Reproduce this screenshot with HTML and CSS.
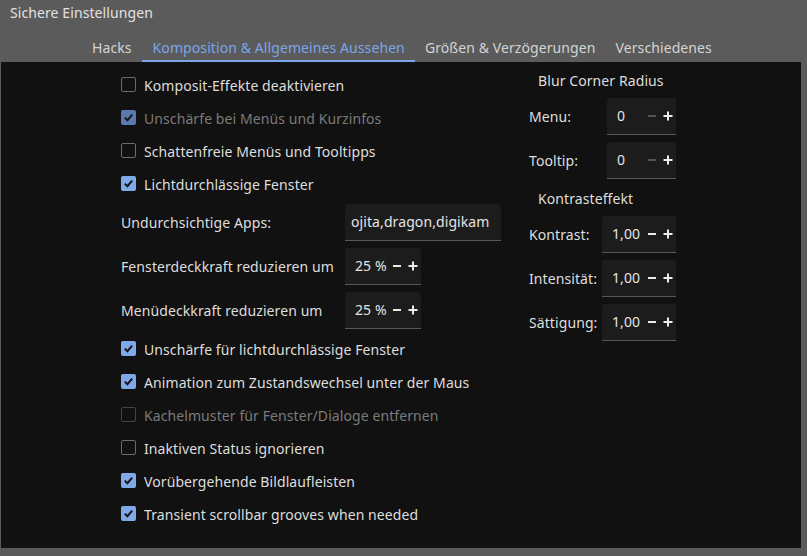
FILE: index.html
```html
<!DOCTYPE html>
<html lang="de">
<head>
<meta charset="utf-8">
<title>Sichere Einstellungen</title>
<link rel="stylesheet" href="styles.css">
</head>
<body>
<div class="window">
  <div class="title">Sichere Einstellungen</div>
  <div class="tabs">
    <div class="tab">Hacks</div>
    <div class="tab active">Komposition &amp; Allgemeines Aussehen</div>
    <div class="tab">Größen &amp; Verzögerungen</div>
    <div class="tab">Verschiedenes</div>
  </div>
  <div class="panel">
    <div class="col-left">
      <div class="check"><span class="box"></span><span class="lbl">Komposit-Effekte deaktivieren</span></div>
      <div class="check disabled"><span class="box on"><svg viewBox="0 0 15 15"><path d="M3.8 7.6 L6.4 10.2 L11.2 4.6"/></svg></span><span class="lbl">Unschärfe bei Menüs und Kurzinfos</span></div>
      <div class="check"><span class="box"></span><span class="lbl">Schattenfreie Menüs und Tooltipps</span></div>
      <div class="check"><span class="box on"><svg viewBox="0 0 15 15"><path d="M3.8 7.6 L6.4 10.2 L11.2 4.6"/></svg></span><span class="lbl">Lichtdurchlässige Fenster</span></div>

      <div class="formrow"><span class="flabel">Undurchsichtige Apps:</span><div class="field text-field"><span class="clip">ojita,dragon,digikam</span></div></div>
      <div class="formrow"><span class="flabel">Fensterdeckkraft reduzieren um</span><div class="field spin w76"><span class="val">25 %</span><span class="btns"><svg class="minus" viewBox="0 0 16 16"><rect x="4" y="7" width="8" height="2"/></svg><svg class="plus" viewBox="0 0 16 16"><rect x="3.5" y="7" width="9" height="2"/><rect x="7" y="3.5" width="2" height="9"/></svg></span></div></div>
      <div class="formrow"><span class="flabel">Menüdeckkraft reduzieren um</span><div class="field spin w76"><span class="val">25 %</span><span class="btns"><svg class="minus" viewBox="0 0 16 16"><rect x="4" y="7" width="8" height="2"/></svg><svg class="plus" viewBox="0 0 16 16"><rect x="3.5" y="7" width="9" height="2"/><rect x="7" y="3.5" width="2" height="9"/></svg></span></div></div>

      <div class="check"><span class="box on"><svg viewBox="0 0 15 15"><path d="M3.8 7.6 L6.4 10.2 L11.2 4.6"/></svg></span><span class="lbl">Unschärfe für lichtdurchlässige Fenster</span></div>
      <div class="check"><span class="box on"><svg viewBox="0 0 15 15"><path d="M3.8 7.6 L6.4 10.2 L11.2 4.6"/></svg></span><span class="lbl">Animation zum Zustandswechsel unter der Maus</span></div>
      <div class="check disabled"><span class="box"></span><span class="lbl">Kachelmuster für Fenster/Dialoge entfernen</span></div>
      <div class="check"><span class="box"></span><span class="lbl">Inaktiven Status ignorieren</span></div>
      <div class="check"><span class="box on"><svg viewBox="0 0 15 15"><path d="M3.8 7.6 L6.4 10.2 L11.2 4.6"/></svg></span><span class="lbl">Vorübergehende Bildlaufleisten</span></div>
      <div class="check"><span class="box on"><svg viewBox="0 0 15 15"><path d="M3.8 7.6 L6.4 10.2 L11.2 4.6"/></svg></span><span class="lbl">Transient scrollbar grooves when needed</span></div>
    </div>

    <div class="col-right">
      <div class="heading">Blur Corner Radius</div>
      <div class="rrow"><span class="rlabel l78">Menu:</span><div class="field spin w69"><span class="val">0</span><span class="btns"><svg class="minus off" viewBox="0 0 16 16"><rect x="4" y="7" width="8" height="2"/></svg><svg class="plus" viewBox="0 0 16 16"><rect x="3.5" y="7" width="9" height="2"/><rect x="7" y="3.5" width="2" height="9"/></svg></span></div></div>
      <div class="rrow"><span class="rlabel l78">Tooltip:</span><div class="field spin w69"><span class="val">0</span><span class="btns"><svg class="minus off" viewBox="0 0 16 16"><rect x="4" y="7" width="8" height="2"/></svg><svg class="plus" viewBox="0 0 16 16"><rect x="3.5" y="7" width="9" height="2"/><rect x="7" y="3.5" width="2" height="9"/></svg></span></div></div>

      <div class="heading second">Kontrasteffekt</div>
      <div class="rrow"><span class="rlabel l73">Kontrast:</span><div class="field spin w74"><span class="val">1,00</span><span class="btns"><svg class="minus" viewBox="0 0 16 16"><rect x="4" y="7" width="8" height="2"/></svg><svg class="plus" viewBox="0 0 16 16"><rect x="3.5" y="7" width="9" height="2"/><rect x="7" y="3.5" width="2" height="9"/></svg></span></div></div>
      <div class="rrow"><span class="rlabel l73">Intensität:</span><div class="field spin w74"><span class="val">1,00</span><span class="btns"><svg class="minus" viewBox="0 0 16 16"><rect x="4" y="7" width="8" height="2"/></svg><svg class="plus" viewBox="0 0 16 16"><rect x="3.5" y="7" width="9" height="2"/><rect x="7" y="3.5" width="2" height="9"/></svg></span></div></div>
      <div class="rrow"><span class="rlabel l73">Sättigung:</span><div class="field spin w74"><span class="val">1,00</span><span class="btns"><svg class="minus" viewBox="0 0 16 16"><rect x="4" y="7" width="8" height="2"/></svg><svg class="plus" viewBox="0 0 16 16"><rect x="3.5" y="7" width="9" height="2"/><rect x="7" y="3.5" width="2" height="9"/></svg></span></div></div>
    </div>
  </div>
</div>
</body>
</html>
```
FILE: styles.css
```css
* { box-sizing: border-box; }

html, body {
  margin: 0;
  padding: 0;
  background: #5b5b5b;
}

body {
  font-family: "Noto Sans", "Open Sans", sans-serif;
  font-size: 14px;
  letter-spacing: 0.09px;
  color: #dedede;
  width: 807px;
  height: 556px;
  overflow: hidden;
}

.title {
  padding: 3px 10px 0;
  line-height: 19px;
  height: 22px;
  color: #e2e2e2;
}

.tabs {
  display: flex;
  margin-top: 14px;
  padding-left: 82px;
  height: 26px;
}

.tab {
  padding: 2px 10px 0;
  line-height: 20px;
  height: 26px;
  color: #d4d4d4;
  border-bottom: 2px solid transparent;
}

.tab.active {
  color: #7ba6e8;
  border-bottom-color: #7ba6e8;
  padding-left: 11px;
}

.panel {
  margin-left: 1px;
  width: 800px;
  height: 486px;
  background: #111111;
  display: flex;
  padding-top: 6px;
}

.col-left {
  width: 528px;
  padding-left: 120px;
  display: flex;
  flex-direction: column;
}

.check {
  display: flex;
  align-items: center;
  height: 33px;
  gap: 8px;
  color: #dedede;
}

.check .lbl { padding-top: 2px; }

.check.disabled { color: #7b7b7b; }

.box {
  width: 15px;
  height: 15px;
  border: 1.5px solid #6b6b6b;
  border-radius: 2px;
  flex: none;
  display: flex;
  align-items: center;
  justify-content: center;
  margin-top: -1px;
}

.check.disabled .box { border-color: #444; }

.box.on {
  border: none;
  background: #80a9ea;
}

.check.disabled .box.on { background: #5a7aaf; }

.box svg {
  width: 15px;
  height: 15px;
  fill: none;
  stroke: #151515;
  stroke-width: 2;
}

.formrow {
  display: flex;
  align-items: center;
  height: 44px;
}

.flabel {
  width: 224px;
  flex: none;
}

.field {
  height: 37px;
  background: #1c1c1c;
  border-bottom: 1px solid #585858;
  border-radius: 3px 3px 0 0;
  display: flex;
  align-items: center;
  color: #e4e4e4;
}

.text-field {
  width: 156px;
  padding-left: 6px;
  overflow: hidden;
}

.clip { white-space: nowrap; }

.spin { padding-left: 10px; }
.w76 { width: 76px; }
.w69 { width: 69px; }
.w74 { width: 74px; }

.val { flex: 1; }

.btns {
  display: flex;
  flex: none;
}

.btns svg {
  width: 16px;
  height: 16px;
  fill: #ececec;
}

.btns svg.off { fill: #555555; }

.col-right {
  display: flex;
  flex-direction: column;
}

.heading {
  height: 26px;
  line-height: 26px;
  padding-left: 9px;
  color: #dedede;
}

.heading.second { margin-top: 4px; }

.rrow {
  display: flex;
  align-items: center;
  height: 44px;
}

.rlabel { flex: none; }
.l78 { width: 78px; }
.l73 { width: 73px; }
```
